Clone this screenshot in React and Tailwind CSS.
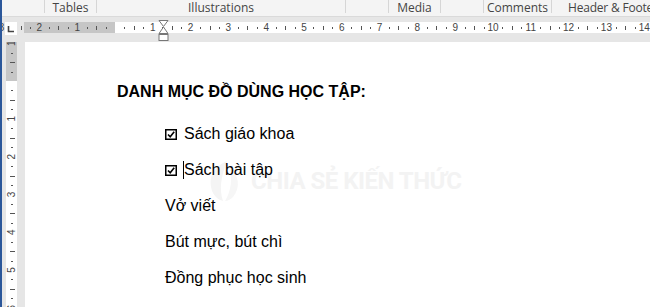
import React from 'react';

const CM = 37.8;
const H_ORIGIN = 115;
const V_ORIGIN = 81;

const groups = [
  { w: 44, label: '' },
  { w: 52, label: 'Tables' },
  { w: 249, label: 'Illustrations' },
  { w: 43, label: '' },
  { w: 52, label: 'Media' },
  { w: 43, label: '' },
  { w: 68, label: 'Comments' },
  { w: 120, label: 'Header & Footer', left: true },
];

const HorizontalRuler = () => {
  const marks = [];
  for (let n = -3; n <= 14; n++) {
    const x0 = H_ORIGIN + n * CM;
    if (n !== 0) {
      marks.push(
        <text key={'t' + n} x={x0} y={31} fontSize="10" textAnchor="middle" fill="#444" fontFamily="Liberation Sans, Arial, sans-serif">
          {Math.abs(n)}
        </text>
      );
    }
    [1, 3].forEach((q) => {
      const x = Math.round(x0 + (q * CM) / 4) + 0.5;
      marks.push(<line key={'d' + n + q} x1={x} x2={x} y1={27} y2={29} stroke="#555" strokeWidth="1" />);
    });
    const xh = Math.round(x0 + CM / 2) + 0.5;
    marks.push(<line key={'h' + n} x1={xh} x2={xh} y1={26} y2={30} stroke="#555" strokeWidth="1" />);
  }
  return (
    <svg width="650" height="25" viewBox="0 17 650 25" className="block">
      <rect x="24" y="22" width={H_ORIGIN - 24} height="11" fill="#c6c6c6" />
      <rect x={H_ORIGIN} y="22" width={650 - H_ORIGIN} height="11" fill="#ffffff" />
      <g>{marks}</g>
      {/* tab selector */}
      <rect x="5" y="22" width="12" height="13" fill="#ffffff" />
      <path d="M8.5 26 V31.5 H14" stroke="#444" strokeWidth="1.6" fill="none" />
      {/* indent markers */}
      <path d="M159 20.5 H168 L163.5 26.5 Z" fill="#fff" stroke="#777" />
      <path d="M163.5 27 L168 33.5 H159 Z" fill="#fff" stroke="#777" />
      <rect x="159" y="34.5" width="9" height="6" fill="#fff" stroke="#777" />
    </svg>
  );
};

const VerticalRuler = () => {
  const marks = [];
  for (let n = -1; n <= 6; n++) {
    const y0 = V_ORIGIN + n * CM;
    if (n !== 0) {
      marks.push(
        <text key={'t' + n} x={11.5} y={y0} fontSize="10" textAnchor="middle" dominantBaseline="central" fill="#444" fontFamily="Liberation Sans, Arial, sans-serif" transform={`rotate(-90 11.5 ${y0})`}>
          {Math.abs(n)}
        </text>
      );
    }
    [1, 3].forEach((q) => {
      const y = Math.round(y0 + (q * CM) / 4) + 0.5;
      marks.push(<line key={'d' + n + q} x1={11} x2={13} y1={y} y2={y} stroke="#555" />);
    });
    const yh = Math.round(y0 + CM / 2) + 0.5;
    marks.push(<line key={'h' + n} x1={10} x2={15} y1={yh} y2={yh} stroke="#555" />);
  }
  return (
    <svg width="25" height="265" viewBox="0 42 25 265" className="block">
      <rect x="6" y="41" width="11" height={V_ORIGIN - 41} fill="#c6c6c6" />
      <rect x="6" y={V_ORIGIN} width="11" height={307 - V_ORIGIN} fill="#ffffff" />
      <g>{marks}</g>
    </svg>
  );
};

const CheckBox = () => (
  <svg width="12" height="11" viewBox="0 0 12 11" className="inline-block mr-[7px] align-[-1px]">
    <rect x="0.75" y="0.75" width="10.5" height="9.5" fill="none" stroke="#000" strokeWidth="1.5" />
    <path d="M3 5.5 L5.2 7.8 L9.2 2.8" fill="none" stroke="#000" strokeWidth="1.6" />
  </svg>
);

const Watermark = () => (
  <div className="absolute left-[178px] top-[117px] flex items-center gap-[4px] pointer-events-none select-none">
    <svg width="44" height="44" viewBox="0 0 44 44">
      <path d="M24 2 C10 8 4 20 10 34 C12 38 16 41 20 42 C16 30 18 18 24 2 Z" fill="#f4f4f4" />
      <path d="M26 8 C36 16 38 28 30 38 C28 40 25 42 22 42 C28 32 30 20 26 8 Z" fill="#f6f6f6" />
    </svg>
    <span className="text-[24px] font-bold tracking-[-0.5px] text-[#f3f3f3] whitespace-nowrap font-['Roboto',sans-serif]">
      CHIA SẺ KIẾN THỨC
    </span>
  </div>
);

export default function App() {
  return (
    <div className="w-[650px] h-[307px] overflow-hidden flex flex-col bg-[#e6e6e6] border-l-2 border-[#2b579a] font-['Liberation_Sans',Arial,sans-serif]">
      <div className="h-[17px] shrink-0 bg-[#f4f4f4] border-b border-[#dadada] flex -ml-[2px]">
        {groups.map((g, i) => (
          <div
            key={i}
            style={{ width: g.w }}
            className={`h-[13px] shrink-0 text-[12px] leading-[16px] text-[#444] whitespace-nowrap font-['Open_Sans',sans-serif] ${i > 0 ? 'border-l border-[#d6d6d6]' : ''} ${g.left ? 'pl-[16px] tracking-[-0.2px]' : 'text-center'}`}
          >
            {g.label}
          </div>
        ))}
      </div>
      <div className="h-[25px] shrink-0 -ml-[2px]">
        <HorizontalRuler />
      </div>
      <div className="flex flex-1 min-h-0 -ml-[2px]">
        <div className="w-[25px] shrink-0 border-l-2 border-[#2b579a]">
          <div className="-ml-[2px]">
            <VerticalRuler />
          </div>
        </div>
        <div className="flex-1 bg-white relative pl-[92px] pt-[38px] text-black">
          <Watermark />
          <div className="relative">
            <h1 className="text-[16px] leading-[24px] font-bold whitespace-nowrap">DANH MỤC ĐỒ DÙNG HỌC TẬP:</h1>
            <ul className="mt-[12px] ml-[48px] text-[16px] leading-[36px]">
              <li className="whitespace-nowrap"><CheckBox />Sách giáo khoa</li>
              <li className="whitespace-nowrap">
                <CheckBox />
                <span className="inline-block w-px h-[18px] bg-black align-[-4px] -ml-[1px]"></span>Sách bài tập
              </li>
              <li>Vở viết</li>
              <li>Bút mực, bút chì</li>
              <li>Đồng phục học sinh</li>
            </ul>
          </div>
        </div>
      </div>
    </div>
  );
}
